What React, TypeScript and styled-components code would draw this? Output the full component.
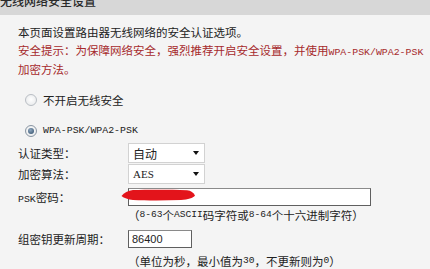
import React from "react";
import styled, { createGlobalStyle } from "styled-components";

const Global = createGlobalStyle`
  html, body { margin: 0; padding: 0; background: #f4f4f4; }
  body { font-family: "Noto Sans CJK SC", "Noto Sans", sans-serif; color: #222; }
  * { box-sizing: border-box; }
`;

const Page = styled.div`
  width: 430px;
  height: 269px;
  overflow: hidden;
  background: #f4f4f4;
  display: flex;
  flex-direction: column;
`;

const Header = styled.div`
  height: 15px;
  flex: none;
  background: #d7d7d7;
  overflow: hidden;
`;

const HeaderText = styled.div`
  margin-top: -8px;
  padding-left: 0;
  font-size: 12px;
  line-height: 17px;
  color: #2a2a2a;
  font-weight: 500;
`;

const Intro = styled.div`
  margin-top: 9px;
  padding-left: 18px;
  font-size: 11.5px;
  line-height: 17.5px;
  white-space: nowrap;
`;

const Line = styled.div<{ $red?: boolean }>`
  color: ${(p) => (p.$red ? "#a62a2c" : "#222")};
`;

const Mono = styled.span`
  font-family: "Liberation Mono", "DejaVu Sans Mono", monospace;
  font-size: 9.9px;
`;

const RadioRow = styled.div<{ $mt: number }>`
  margin-top: ${(p) => p.$mt}px;
  height: 18px;
  display: flex;
  align-items: center;
  padding-left: 25px;
  gap: 6px;
  font-size: 11.5px;
  white-space: nowrap;
`;

const Radio = styled.span<{ $checked?: boolean }>`
  width: 12px;
  height: 12px;
  border-radius: 50%;
  border: 1px solid ${(p) => (p.$checked ? "#8a96a3" : "#b9bec4")};
  background: radial-gradient(circle at 50% 45%, #ffffff 0%, #e4e6e8 100%);
  display: inline-flex;
  align-items: center;
  justify-content: center;
  flex: none;
  &::after {
    content: "";
    width: 6px;
    height: 6px;
    border-radius: 50%;
    background: ${(p) =>
      p.$checked ? "radial-gradient(circle at 40% 35%, #8fa7bf, #2d4a66)" : "transparent"};
  }
`;

const FormRow = styled.div<{ $mt: number; $h: number }>`
  margin-top: ${(p) => p.$mt}px;
  height: ${(p) => p.$h}px;
  display: grid;
  grid-template-columns: 110px 1fr;
  align-items: center;
  padding-left: 18px;
  font-size: 11.5px;
  white-space: nowrap;
`;

const Label = styled.div``;

const Select = styled.div`
  width: 77px;
  height: 20px;
  background: #fff;
  border: 1px solid #d2d2d2;
  display: flex;
  align-items: center;
  justify-content: space-between;
  padding: 0 5px 0 4px;
  font-size: 12px;
`;

const SelectValue = styled.span<{ $serif?: boolean }>`
  font-family: ${(p) =>
    p.$serif ? '"Liberation Serif", serif' : '"Noto Sans CJK SC", sans-serif'};
  font-size: ${(p) => (p.$serif ? "11px" : "12px")};
`;

const Arrow = styled.span`
  width: 0;
  height: 0;
  border-left: 3.5px solid transparent;
  border-right: 3.5px solid transparent;
  border-top: 4px solid #111;
`;

const FieldWrap = styled.div`
  position: relative;
  display: flex;
  align-items: center;
`;

const TextBox = styled.div<{ $w: number; $h: number }>`
  width: ${(p) => p.$w}px;
  height: ${(p) => p.$h}px;
  background: #fff;
  border: 1px solid #5f5f5f;
  border-top-color: #8a8a8a;
  display: flex;
  align-items: center;
  padding-left: 3px;
  font-family: "Liberation Sans", Arial, sans-serif;
  font-size: 11px;
  color: #222;
`;

const Scribble = styled.svg`
  position: absolute;
  left: -7px;
  top: 1px;
`;

const Hint = styled.div<{ $mt: number }>`
  margin-top: ${(p) => p.$mt}px;
  height: 18px;
  display: flex;
  align-items: center;
  padding-left: 128px;
  font-size: 11.5px;
  white-space: nowrap;
  color: #222;
`;

const Small = styled.span`
  font-family: "Liberation Mono", "DejaVu Sans Mono", monospace;
  font-size: 9.6px;
`;

export default function App() {
  return (
    <>
      <Global />
      <Page>
        <Header>
          <HeaderText>无线网络安全设置</HeaderText>
        </Header>
        <Intro>
          <Line>本页面设置路由器无线网络的安全认证选项。</Line>
          <Line $red>
            安全提示：为保障网络安全，强烈推荐开启安全设置，并使用<Mono>WPA-PSK/WPA2-PSK</Mono>
          </Line>
          <Line $red>加密方法。</Line>
        </Intro>
        <RadioRow $mt={12.5}>
          <Radio />
          <span>不开启无线安全</span>
        </RadioRow>
        <RadioRow $mt={14}>
          <Radio $checked />
          <Mono>WPA-PSK/WPA2-PSK</Mono>
        </RadioRow>
        <FormRow $mt={4} $h={21}>
          <Label>认证类型：</Label>
          <Select>
            <SelectValue>自动</SelectValue>
            <Arrow />
          </Select>
        </FormRow>
        <FormRow $mt={1} $h={21}>
          <Label>加密算法：</Label>
          <Select>
            <SelectValue $serif>AES</SelectValue>
            <Arrow />
          </Select>
        </FormRow>
        <FormRow $mt={4} $h={19}>
          <Label>
            <Mono>PSK</Mono>密码：
          </Label>
          <FieldWrap>
            <TextBox $w={243} $h={18} />
            <Scribble width="76" height="12" viewBox="0 0 76 12">
              <path
                d="M0.5 7 C3 4 7 1.5 12 1 C28 0.6 50 0.6 66 1.2 C70 1.6 72.5 3.5 74 6.5 C72 9 67 10.5 60 11 C44 11.6 26 11.6 12 11 C7 10.6 3 9 0.5 7 Z"
                fill="#e3141b"
              />
            </Scribble>
          </FieldWrap>
        </FormRow>
        <Hint $mt={0}>
          （<Small>8-63</Small>个<Small>ASCII</Small>码字符或<Small>8-64</Small>个十六进制字符）
        </Hint>
        <FormRow $mt={7} $h={19}>
          <Label>组密钥更新周期：</Label>
          <FieldWrap>
            <TextBox $w={64} $h={18}>86400</TextBox>
          </FieldWrap>
        </FormRow>
        <Hint $mt={4}>
          （单位为秒，最小值为<Small>30</Small>，不更新则为<Small>0</Small>）
        </Hint>
      </Page>
    </>
  );
}
